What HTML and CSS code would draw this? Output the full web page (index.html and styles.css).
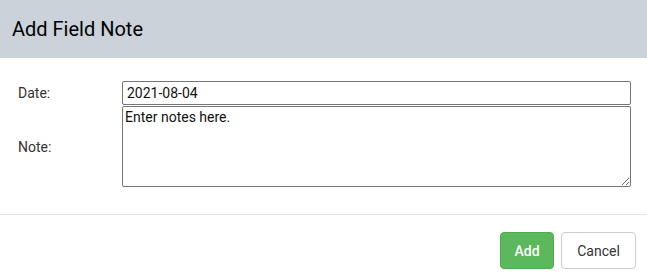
FILE: index.html
```html
<!DOCTYPE html>
<html lang="en">

<head>
    <meta charset="UTF-8">
    <meta name="viewport" content="width=device-width, initial-scale=1.0">
    <title>Add Field Note</title>
    <link rel="stylesheet" href="styles.css">
</head>

<body>
    <div class="modal">
        <div class="modal-header">
            <h4 class="modal-title">Add Field Note</h4>
        </div>
        <div class="modal-body">
            <div class="form-grid">
                <label class="lbl" for="noteDate">Date:</label>
                <input class="date-input" id="noteDate" type="text" value="2021-08-04">
                <label class="lbl" for="noteText">Note:</label>
                <textarea class="note-input" id="noteText">Enter notes here.</textarea>
            </div>
        </div>
        <div class="modal-footer">
            <button class="btn btn-add">Add</button>
            <button class="btn btn-cancel">Cancel</button>
        </div>
    </div>
</body>

</html>
```

FILE: styles.css
```css
* {
    margin: 0px;
    padding: 0px;
    box-sizing: border-box;
}

body {
    font-family: Roboto, "Liberation Sans", sans-serif;
    font-size: 14px;
    color: #333;
    background-color: #fff;
}

.modal {
    width: 647px;
    height: 278px;
}

.modal-header {
    height: 58px;
    background-color: #cbd2da;
    padding: 0 12px;
    display: flex;
    align-items: center;
}

.modal-title {
    font-size: 20px;
    font-weight: 400;
    color: #000;
}

.modal-body {
    padding: 23px 16px 27px 18px;
    border-bottom: 1px solid #e5e5e5;
}

.form-grid {
    display: grid;
    grid-template-columns: 104px 1fr;
    row-gap: 1px;
    align-items: center;
}

.lbl {
    color: #333;
}

.date-input,
.note-input {
    font-family: Roboto, "Liberation Sans", sans-serif;
    font-size: 14px;
    color: #111;
    border: 1px solid #767676;
    border-radius: 2px;
    width: 100%;
}

.date-input {
    height: 24px;
    padding: 0 4px;
}

.note-input {
    height: 81px;
    padding: 2px;
    resize: vertical;
}

.modal-footer {
    display: flex;
    justify-content: flex-end;
    gap: 7px;
    padding: 17px 11px 0 0;
}

.btn {
    height: 37px;
    font-family: Roboto, "Liberation Sans", sans-serif;
    font-size: 14px;
    border-radius: 4px;
    padding: 0 12px;
    cursor: pointer;
}

.btn-add {
    width: 54px;
    background-color: #5cb85c;
    border: 1px solid #4cae4c;
    color: #fff;
    font-weight: 500;
}

.btn-cancel {
    width: 75px;
    background-color: #fff;
    border: 1px solid #ccc;
    color: #333;
}
```
